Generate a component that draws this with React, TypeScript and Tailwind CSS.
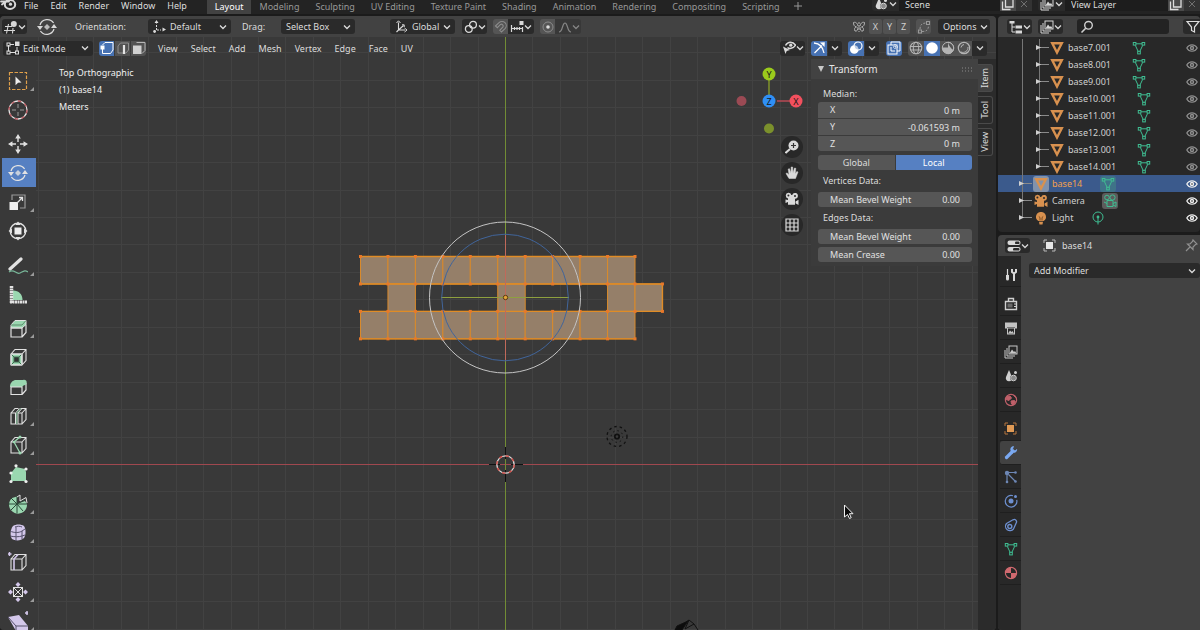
import React, { useState } from "react";

type Kids = { children?: React.ReactNode };

function Ico({ w = 14, h = 14, className = "", children }: Kids & { w?: number; h?: number; className?: string }) {
  return (
    <svg width={w} height={h} viewBox={`0 0 ${w} ${h}`} fill="none" stroke="currentColor" className={`shrink-0 ${className}`} aria-hidden="true">
      {children}
    </svg>
  );
}

const Chevron = ({ className = "" }: { className?: string }) => (
  <Ico w={8} h={6} className={className}><path d="M1 1.5 4 4.5 7 1.5" strokeWidth="1.3" /></Ico>
);

function Select({ label, options, icon, className = "" }: { label: string; options: string[]; icon?: React.ReactNode; className?: string }) {
  return (
    <label className={`relative flex h-[15px] shrink-0 items-center rounded-[3px] bg-[#2a2a2a] text-[#dcdcdc] ${className}`}>
      {icon}
      <select aria-label={label} className="h-full min-w-0 flex-1 appearance-none bg-transparent text-[9px] leading-[15px] outline-none">
        {options.map((o) => <option key={o}>{o}</option>)}
      </select>
      <Chevron className="pointer-events-none absolute right-1" />
    </label>
  );
}

function IconMenu({ label, children, className = "" }: Kids & { label: string; className?: string }) {
  return (
    <button aria-label={label} className={`flex h-[15px] shrink-0 items-center justify-between rounded-[3px] bg-[#2a2a2a] px-0.5 text-[#d8d8d8] ${className}`}>
      {children}
      <Chevron />
    </button>
  );
}

function IconButton({ label, children, className = "" }: Kids & { label: string; className?: string }) {
  return (
    <button aria-label={label} className={`flex h-[15px] shrink-0 items-center justify-center ${className}`}>{children}</button>
  );
}

/* ---------- icons ---------- */

const BlenderLogo = () => (
  <Ico w={17} h={16} className="text-[#d8d8d8]">
    <path d="M2 8.5 9 3M1 5.5h8" strokeWidth="1.8" strokeLinecap="round" />
    <ellipse cx="10" cy="8.5" rx="5.2" ry="4.4" strokeWidth="2" />
    <circle cx="10.5" cy="8.2" r="1.6" fill="currentColor" stroke="none" />
  </Ico>
);
const RotateIcon = ({ size = 20 }: { size?: number }) => (
  <svg width={size} height={size} viewBox="0 0 20 20" fill="none" stroke="currentColor" aria-hidden="true" className="shrink-0">
    <path d="M3 8a7.600 7.600 0 0 1 13.600-2M17 12a7.600 7.600 0 0 1-13.600 2" strokeWidth="1.300" />
    <path d="M0 9h6l-3 4zM20 11h-6l3-4z" fill="currentColor" stroke="none" />
    <path d="m10 7 3 3-3 3-3-3z" fill="currentColor" fillOpacity=".8" stroke="none" />
  </svg>
);
const GridBallIcon = () => (
  <Ico w={14} h={14}><path d="M1 6.500h7M0 10.500h11M4.500 4 2.500 13.500M9 8l-.5 5.500" strokeWidth="1.1" /><circle cx="9.800" cy="4" r="3" fill="currentColor" stroke="none" /></Ico>
);
const AxesDots = () => (
  <Ico w={13} h={13}><path d="M3.500 2v1.500M3.500 5v5M4 10h4" strokeDasharray="2 1" /><path d="m3.500 0 2 3h-4zM13 9.500 9.500 7.500v4z" fill="currentColor" stroke="none" /><circle cx="1.600" cy="11.500" r="1.400" fill="currentColor" stroke="none" /></Ico>
);
const AxesIcon = () => (
  <Ico w={13} h={13}><path d="M3.500 2.500V10l6.500 0M3.500 10l-2 2M3.500 10l5-4.500" strokeWidth="1.100" /><path d="M1.500 3 3.500.8 5.500 3M9.500 8l2.500 2-2.500 2M7 4.800h2.200V7" /></Ico>
);
const LinkIcon = () => (
  <Ico><circle cx="9" cy="4.800" r="3.400" strokeWidth="1.300" /><circle cx="4.800" cy="9" r="3.400" strokeWidth="1.300" /><circle cx="7" cy="7" r="1" fill="currentColor" stroke="none" /></Ico>
);
const MagnetIcon = () => (
  <Ico><path d="M1.500 6 5 2.700a4.200 4.200 0 0 1 6 6L7.500 12 5.800 10.300 9 7a1.900 1.900 0 0 0-2.500-2.600L3.300 7.700z" strokeWidth="1.100" /></Ico>
);
const SnapIcon = () => (
  <Ico><path d="M1.500 5v7M12.500 7v5M1.500 8.500h11M4.500 7v3M7 7v3M9.500 7v3" strokeWidth="1.200" /><rect x="9.500" y="1" width="4" height="4" fill="currentColor" stroke="none" /></Ico>
);
const FalloffIcon = () => <Ico><path d="M1 12c4 0 3-9 6-9s2 9 6 9" strokeWidth="1.200" /></Ico>;
const ButterflyIcon = () => (
  <Ico><path d="M7 2v10" strokeDasharray="2 1" /><path d="M6 6C5 2 3 2 1.500 2.500c0 2 .5 4 3 4.500-2 .5-2.500 2-1.500 4 2 .5 3-1 3-4M8 6c1-4 3-4 4.500-3.500 0 2-.5 4-3 4.500 2 .5 2.500 2 1.500 4-2 .5-3-1-3-4" /></Ico>
);
const AutoMergeIcon = () => (
  <Ico><path d="M3 9c0-4 2-6 6-6M5 11.500c4 0 6-1 6.500-5" strokeDasharray="2 1.500" /><rect x="1.500" y="10" width="3" height="3" /><rect x="9.500" y="1.500" width="3" height="3" /></Ico>
);
const EditModeIcon = () => (
  <Ico><path d="M2.500 4v6.500M4 11.500h6M11 6v4.500M4 3.500h4" /><rect x="1" y="2" width="3" height="3" /><rect x="1" y="10" width="3" height="3" /><rect x="9.500" y="10" width="3" height="3" /><rect x="9" y="0.500" width="4.500" height="4.500" fill="currentColor" stroke="none" /></Ico>
);
const VertSel = () => <Ico><path d="M5 1.500h8v7.500l-2.500 3.500h-8V8M2.500 4 5 1.500" /><rect x="0.500" y="4.500" width="4" height="4" fill="#fff" stroke="none" /></Ico>;
const EdgeSel = () => <Ico><path d="M4.500 2h8v7l-2.500 3H2V5z" stroke="#8f8f8f" /><path d="M8 4v9" stroke="#e4e4e4" strokeWidth="2.200" /></Ico>;
const FaceSel = () => <Ico><path d="M4.500 1.500h8.500v8l-3 3" stroke="#b5b5b5" /><rect x="1" y="4.500" width="8.500" height="8.500" fill="#d0d0d0" stroke="none" /></Ico>;
const EyeCursor = () => (
  <Ico><path d="M3.500 4.500C6 0 11 .5 13.500 4.200 11 8 7 8 5.500 6.500" strokeWidth="1.500" /><circle cx="8.800" cy="4.200" r="1.600" fill="currentColor" stroke="none" /><path d="m1 5.500 7 3.500-3.300 1-1.200 3z" fill="currentColor" stroke="none" /></Ico>
);
const GizmoIcon = () => <Ico><path d="M2 2c5.500.5 9 4 10 10M2.500 12 10 4.500" strokeWidth="1.300" /><path d="M12.800 1.200 12.500 6 8 1.500z" fill="currentColor" stroke="none" /></Ico>;
const OverlayIcon = () => <Ico><circle cx="5.300" cy="8.500" r="4.300" fill="#fff" stroke="none" /><circle cx="9" cy="5" r="4" strokeWidth="1.200" fill="#4772b3" fillOpacity=".35" /></Ico>;
const XrayIcon = () => <Ico><rect x="1" y="4" width="9" height="9" /><path d="M4 4V1h9v9h-3M4 6v4h4" /><path d="M6 6h5M8 3v5" strokeDasharray="1 1" /></Ico>;
const WireBall = () => <Ico><circle cx="7" cy="7" r="5.800" strokeWidth="1.100" /><ellipse cx="7" cy="7" rx="2.700" ry="5.800" /><path d="M1.500 5.500h11M1.500 9h11" /></Ico>;
const MatBall = () => <Ico><circle cx="7" cy="7" r="5.700" /><path d="M7 1.300a5.700 5.700 0 0 1 0 11.400V7H1.300" fill="none" /><path d="M7 1.300V7H1.300a5.700 5.700 0 0 0 11 2C10 8 8 5 7 1.300z" fill="currentColor" stroke="none" /></Ico>;
const RenderBall = () => <Ico><circle cx="7" cy="7" r="5.700" strokeWidth="1.200" /><path d="M4 6.500A3.500 3.500 0 0 1 7 3.500M4 11a5 5 0 0 0 7-5" /></Ico>;
const SceneIcon = () => <Ico><path d="m5 1 3 7a3.200 3.200 0 1 1-6 0z" fill="currentColor" stroke="none" /><circle cx="9.500" cy="9" r="3" fill="#8a8a8a" stroke="#2a2a2a" /><circle cx="9.500" cy="9" r="2.800" /><circle cx="11.500" cy="3.500" r="1.500" fill="currentColor" stroke="none" /></Ico>;
const ImagesIcon = () => <Ico><path d="M1 5v8h8M3 3v8h8" /><rect x="5" y="1" width="8" height="8" /><path d="m5.500 8.500 2.500-4 2 2.500 1-1 1.500 2.500z" fill="currentColor" stroke="none" /></Ico>;
const CopyIcon = () => <Ico><path d="M4.500 1.500h7.500v8.500H4.500zM1.500 4.500v8h8" strokeWidth="1.300" /></Ico>;
const TreeIcon = () => <Ico><rect x="0.500" y="1" width="5" height="2.500" fill="currentColor" stroke="none" /><path d="M3 3v9h3M3 7h3" /><rect x="6.500" y="5.500" width="6.500" height="3" fill="currentColor" stroke="none" /><rect x="6.500" y="10.500" width="6.500" height="3" fill="currentColor" stroke="none" /></Ico>;
const SearchIcon = () => <Ico><circle cx="8.500" cy="5.300" r="3.800" strokeWidth="1.400" /><path d="M5.700 8.200 1.500 12.500" strokeWidth="1.600" /></Ico>;
const FilterIcon = () => <Ico><path d="M1 1.500h12L8.500 7v5l-3-1.500V7z" strokeWidth="1.200" /></Ico>;
const MeshObj = () => <Ico><path d="M2.200 2.200h9.600L7 11.500z" stroke="#d8914f" strokeWidth="2.400" /></Ico>;
const MeshData = () => (
  <Ico className="text-[#3fbd92]"><path d="M4 2.800h6M3.300 4.300 6.200 10.500M10.700 4.300 7.800 10.500" /><rect x="1.300" y="1.500" width="2.600" height="2.600" /><rect x="10.100" y="1.500" width="2.600" height="2.600" /><rect x="5.700" y="10.300" width="2.600" height="2.600" /></Ico>
);
const Eye = () => <Ico w={12} h={10}><path d="M.8 5C3 .7 9 .7 11.200 5 9 9.300 3 9.300.8 5z" strokeWidth="1.200" /><circle cx="6" cy="5" r="2.200" fill="currentColor" stroke="none" /><circle cx="6" cy="5" r="0.800" fill="#282828" stroke="none" /></Ico>;
const CameraObj = ({ size = 14 }: { size?: number }) => (
  <svg width={size} height={size} viewBox="0 0 14 14" fill="currentColor" stroke="none" aria-hidden="true" className="shrink-0">
    <path d="M3.300.7a3 3 0 0 1 3 2.400h.9a2.900 2.900 0 1 1 2.800 3.600v6H3V10L.5 11V7.500L3 8V6.400A2.900 2.900 0 0 1 3.300.7zM10.500 9.500l3-1.800v5.200l-3-1.700z" fillRule="evenodd" />
    <circle cx="3.400" cy="3.500" r="1" fill="#2a2a2a" /><circle cx="10" cy="3.900" r="1" fill="#2a2a2a" />
  </svg>
);
const CameraData = () => <Ico className="text-[#3fbd92]"><circle cx="4" cy="3.500" r="2.300" /><circle cx="9.500" cy="3.500" r="2.600" /><path d="M4 6.500h6v6H4zM1 8l3 1.500M10 9.500l3-1.500v4.500l-3-1.500" /></Ico>;
const LightObj = () => <Ico className="text-[#d8914f]"><path d="M7 1a4.800 4.800 0 0 1 2.500 9h-5A4.800 4.800 0 0 1 7 1zM5 10.800h4l-.5 2.700h-3z" fill="currentColor" stroke="none" /><path d="M4.800 5.500 6 6.500v3M9.200 5.500 8 6.500v3" stroke="#7a4c22" /></Ico>;
const LightData = () => <Ico className="text-[#3fbd92]"><circle cx="7" cy="6" r="5" /><circle cx="7" cy="6" r="1.400" fill="currentColor" stroke="none" /><path d="M7 7v6.500" /></Ico>;
const PropsIcon = () => <Ico w={14} h={14}><rect x="0.500" y="1.500" width="13" height="4.600" rx="2" fill="currentColor" stroke="none" /><rect x="0.500" y="8" width="13" height="4.600" rx="2" fill="currentColor" stroke="none" /><rect x="8" y="2.500" width="4.500" height="2.600" rx="1.200" fill="#2a2a2a" stroke="none" /><rect x="6" y="9" width="6.500" height="2.600" rx="1.200" fill="#2a2a2a" stroke="none" /></Ico>;
const ObjectIcon = ({ inner = "#e6e6e6" }: { inner?: string }) => <Ico w={13} h={13}><path d="M1 4V1h3M9 1h3v3M12 9v3H9M4 12H1V9" /><rect x="3" y="3" width="7" height="7" fill={inner} stroke="none" /></Ico>;
const PinIcon = () => <Ico w={13} h={13}><path d="m8 1 4 4-1.500.5L8 8v2.500L2.500 5H5l2.500-2.500zM5 8 1 12" strokeWidth="1.200" /></Ico>;

/* ---------- top bar ---------- */

const menus = ["File", "Edit", "Render", "Window", "Help"];
const workspaces = ["Layout", "Modeling", "Sculpting", "UV Editing", "Texture Paint", "Shading", "Animation", "Rendering", "Compositing", "Scripting"];

function DataField({ label, value, icon, className = "" }: { label: string; value: string; icon: React.ReactNode; className?: string }) {
  return (
    <div className={`flex h-[11px] shrink-0 items-end ${className}`}>
      <IconMenu label={`Browse ${label}`} className="w-[27px] rounded-r-none">{icon}</IconMenu>
      <input aria-label={label} defaultValue={value} className="h-[11px] min-w-0 flex-1 bg-[#1d1d1d] px-1.5 pb-[3px] text-[9px] leading-[9px] text-[#dcdcdc] outline-none" />
      <IconButton label={`New ${label}`} className="w-4 bg-[#4a4a4a] text-[#dcdcdc]"><CopyIcon /></IconButton>
      <IconButton label={`Remove ${label}`} className="w-4 bg-[#333333] text-[#707070]"><Ico w={8} h={8}><path d="m1 1 6 6M7 1 1 7" /></Ico></IconButton>
    </div>
  );
}

function TopBar() {
  const [tab, setTab] = useState("Layout");
  return (
    <header className="flex h-[14px] shrink-0 items-start overflow-hidden bg-[#232323]">
      <div className="flex h-2 items-center"><BlenderLogo /></div>
      <nav className="flex gap-3 pl-[7px]">
        {menus.map((m) => <button key={m} className="h-[10px] leading-[9px] text-[#dedede]">{m}</button>)}
      </nav>
      <div className="flex pl-5">
        {workspaces.map((w) => (
          <button key={w} onClick={() => setTab(w)} className={`h-[14px] px-2 leading-3 ${w === tab ? "bg-[#424242] text-white" : "text-[#989898]"}`}>{w}</button>
        ))}
        <button aria-label="Add workspace" className="flex h-3 items-center px-1.5 text-[#989898]"><Ico w={8} h={8}><path d="M4 0v8M0 4h8" /></Ico></button>
      </div>
      <div className="ml-auto flex gap-[6px]">
        <DataField label="Scene" value="Scene" icon={<SceneIcon />} className="w-[160px]" />
        <DataField label="View Layer" value="View Layer" icon={<ImagesIcon />} className="w-[162px]" />
      </div>
    </header>
  );
}

/* ---------- viewport headers ---------- */

function ToolHeader() {
  return (
    <div className="flex h-[21px] shrink-0 items-center rounded-t bg-[#424242] pl-0.5 pr-1.5">
      <IconMenu label="Editor type" className="w-[25px]"><GridBallIcon /></IconMenu>
      <span className="ml-[10px] flex text-[#d8d8d8]"><RotateIcon /></span>
      <span className="ml-[18px] w-[73px]">Orientation:</span>
      <Select label="Orientation" options={["Default"]} icon={<span className="flex w-[22px] justify-center"><AxesDots /></span>} className="w-[83px]" />
      <span className="ml-[11px] w-[39px]">Drag:</span>
      <Select label="Drag" options={["Select Box"]} className="w-[74px] pl-[5px]" />
      <Select label="Transform orientation" options={["Global"]} icon={<span className="flex w-[22px] justify-center"><AxesIcon /></span>} className="ml-[35px] w-[65px]" />
      <IconMenu label="Pivot point" className="ml-[7px] w-[25px]"><LinkIcon /></IconMenu>
      <IconButton label="Snap" className="ml-1.5 w-[15px] rounded-l-[3px] bg-[#555555] text-[#8c8c8c]"><MagnetIcon /></IconButton>
      <IconMenu label="Snapping" className="w-[26px] rounded-l-none"><SnapIcon /></IconMenu>
      <IconButton label="Proportional editing" className="ml-1.5 w-[15px] rounded-l-[3px] bg-[#555555] text-[#8c8c8c]"><Ico><circle cx="7" cy="7" r="5" /><circle cx="7" cy="7" r="1.800" fill="#ddd" stroke="none" /></Ico></IconButton>
      <button aria-label="Falloff" className="flex h-[15px] w-[26px] items-center justify-between rounded-r-[3px] bg-[#383838] px-[3px] text-[#858585]"><FalloffIcon /><Chevron /></button>
      <span className="ml-auto flex w-[17px] text-[#b4b4b4]"><ButterflyIcon /></span>
      <div className="flex gap-px">
        {["X", "Y", "Z"].map((a) => <button key={a} aria-label={`Mirror ${a}`} className="h-[15px] w-[13px] rounded-[2px] bg-[#525252] leading-[15px] text-[#cfcfcf]">{a}</button>)}
      </div>
      <IconButton label="Auto merge" className="ml-1.5 w-[15px] rounded-[3px] bg-[#525252] text-[#999999]"><AutoMergeIcon /></IconButton>
      <button className="ml-[7px] flex h-[15px] w-[52px] items-center justify-between rounded-[3px] bg-[#2a2a2a] pl-[5px] pr-0.5 leading-[15px]">Options<Chevron /></button>
    </div>
  );
}

function ViewHeader() {
  return (
    <div className="relative flex h-[22px] shrink-0 items-center pl-[3px] pr-[9px]">
      <Select label="Mode" options={["Edit Mode"]} icon={<span className="flex w-5 justify-center"><EditModeIcon /></span>} className="w-[90px]" />
      <div className="ml-1.5 flex gap-px">
        <IconButton label="Vertex select" className="w-[15px] rounded-l-[3px] bg-[#4772b3] text-white"><VertSel /></IconButton>
        <IconButton label="Edge select" className="w-[15px] bg-[#525252]"><EdgeSel /></IconButton>
        <IconButton label="Face select" className="w-[15px] rounded-r-[3px] bg-[#525252]"><FaceSel /></IconButton>
      </div>
      <nav className="ml-3 flex gap-[13px]">
        {["View", "Select", "Add", "Mesh", "Vertex", "Edge", "Face", "UV"].map((m) => <button key={m} className="leading-[15px]">{m}</button>)}
      </nav>
      <IconMenu label="Object visibility" className="ml-auto w-[25px]"><EyeCursor /></IconMenu>
      <IconButton label="Show gizmos" className="ml-1.5 w-4 rounded-l-[3px] bg-[#4772b3] text-white"><GizmoIcon /></IconButton>
      <IconButton label="Gizmo options" className="ml-px w-[14px] rounded-r-[3px] bg-[#2a2a2a]"><Chevron /></IconButton>
      <IconButton label="Show overlays" className="ml-1.5 w-4 rounded-l-[3px] bg-[#4772b3] text-white"><OverlayIcon /></IconButton>
      <IconButton label="Overlay options" className="ml-px w-[14px] rounded-r-[3px] bg-[#2a2a2a]"><Chevron /></IconButton>
      <IconButton label="X-ray" className="ml-[7px] w-4 rounded-[3px] bg-[#4772b3] text-white"><XrayIcon /></IconButton>
      <div className="ml-1.5 flex text-[#b4b4b4]">
        <IconButton label="Wireframe" className="w-4 rounded-l-[3px] bg-[#525252]"><WireBall /></IconButton>
        <IconButton label="Solid" className="w-4 bg-[#4772b3] text-white"><Ico><circle cx="7" cy="7" r="5.800" fill="#fff" stroke="none" /></Ico></IconButton>
        <IconButton label="Material preview" className="w-4 bg-[#525252]"><MatBall /></IconButton>
        <IconButton label="Rendered" className="w-4 bg-[#525252]"><RenderBall /></IconButton>
        <IconButton label="Shading options" className="w-[15px] rounded-r-[3px] bg-[#2a2a2a] text-[#d8d8d8]"><Chevron /></IconButton>
      </div>
    </div>
  );
}

/* ---------- scene drawing ---------- */

const STEP = 27.45;
const X0 = 360.5;
const Y0 = 256.5;
const cells: [number, number][] = [];
for (let c = 0; c < 10; c++) cells.push([c, 0], [c, 2]);
[1, 5, 9, 10].forEach((c) => cells.push([c, 1]));
const corners = Array.from(new Set(cells.flatMap(([c, r]) => [`${c},${r}`, `${c + 1},${r}`, `${c},${r + 1}`, `${c + 1},${r + 1}`]))).map((k) => k.split(",").map(Number));

function Scene() {
  const cols = Array.from({ length: 35 }, (_, i) => 505.5 + (i - 17) * STEP);
  const rows = Array.from({ length: 22 }, (_, i) => 464.5 + (i - 15) * STEP);
  return (
    <svg className="absolute inset-0 h-full w-full" aria-hidden="true" fill="none">
      <g transform="translate(0 -37)">
        {cols.map((x) => <path key={x} d={`M${Math.floor(x) + 0.5} 37V1400`} stroke="#424242" />)}
        {rows.map((y) => <path key={y} d={`M36 ${Math.floor(y) + 0.5}H2600`} stroke="#424242" />)}
        <path d="M36 464.500H2600" stroke="#a0484f" />
        <path d="M505.500 37V1400" stroke="#728c35" />

        <g fill="#957f69" stroke="#d98a2b">
          {cells.map(([c, r]) => <rect key={`${c}-${r}`} x={X0 + c * STEP} y={Y0 + r * STEP} width={STEP} height={STEP} />)}
        </g>
        <path d={`M${X0} ${Y0}h274.500M${X0} ${Y0 + STEP}h274.500m0 0h27.450v27.450h-27.450M${X0} ${Y0 + 2 * STEP}h274.500M${X0} ${Y0 + 3 * STEP}h274.500`} stroke="#e08c26" strokeWidth="1.400" />
        <g fill="#e8782a">
          {corners.map(([c, r]) => <rect key={`${c}.${r}`} x={X0 + c * STEP - 1.5} y={Y0 + r * STEP - 1.5} width="3" height="3" />)}
        </g>

        <path d="M505.500 222v34M505.500 339v35" stroke="#7c9a34" />
        <path d="M505.500 235v126" stroke="#c0695a" />
        <path d="M441 297.500h128" stroke="#8ea03f" />
        <circle cx="505" cy="297.500" r="63.300" stroke="#41659b" />
        <circle cx="505" cy="297.500" r="75.500" stroke="#c4c4c4" />
        <circle cx="505.500" cy="297.500" r="2.200" fill="#e2a33a" stroke="#5a3a12" />

        <g stroke="#111111">
          <path d="M489 464.500h11M511 464.500h12M505.500 447v12M505.500 470v12" />
          <circle cx="505.500" cy="464.500" r="8.700" stroke="#dddddd" strokeWidth="1.300" />
          <circle cx="505.500" cy="464.500" r="8.700" stroke="#d8423c" strokeWidth="1.300" strokeDasharray="3.400 3.400" />
          <circle cx="617" cy="436.500" r="10" strokeDasharray="2.500 3" strokeWidth="1.300" />
          <circle cx="617" cy="436.500" r="5.800" strokeDasharray="1.500 3" />
          <circle cx="617" cy="436.500" r="2.200" strokeWidth="1.800" />
          <path d="m675 630 14-10 5 4 4 6M689 620l-4 9 9-5" />
          <path d="m675 630 2-4 11-5-6 9z" fill="#0c0c0c" />
        </g>

        <path d="M769 80v15" stroke="#7d8f2c" strokeWidth="1.600" />
        <path d="M777 101h13" stroke="#b84a54" strokeWidth="1.600" />
        <circle cx="741.500" cy="101" r="5" fill="#9b4a54" />
        <circle cx="769" cy="128.500" r="5" fill="#7b902c" />
        <circle cx="769" cy="74" r="6.500" fill="#9bcb1c" />
        <circle cx="769" cy="101" r="6.500" fill="#2f8ff5" />
        <circle cx="796" cy="101" r="6.500" fill="#f2505e" />
        <g fill="#161616" fontSize="9" textAnchor="middle">
          <text x="769" y="77.500">Y</text>
          <text x="769" y="104.500">Z</text>
          <text x="796" y="104.500">X</text>
        </g>
        <path d="M844.500 505v12l3-2.500 2 4 1.700-.8-1.800-4h3.600z" fill="#0a0a0a" stroke="#f2f2f2" />
      </g>
    </svg>
  );
}

/* ---------- toolbar ---------- */

const G = "#9ad7b0";
const P = "#d3c7ea";
const CubeFrame = () => <path d="M3 7h11v11H3zM3 7l4-4.500h11v11L14 18M14 7l4-4.500" strokeWidth="1.100" />;
const T = ({ children }: Kids) => <Ico w={20} h={20}>{children}</Ico>;

type Tool = { name: string; more?: boolean; icon: React.ReactNode };
const toolGroups: { gap: string; tools: Tool[] }[] = [
  { gap: "", tools: [
    { name: "Select Box", more: true, icon: <T><rect x="1.500" y="1.500" width="17" height="17" stroke="#e0a04a" strokeWidth="1.200" strokeDasharray="3.500 1.500" /><path d="m7.500 5.500 6 6-3.400.2-2.600 2.500z" fill="#eee" stroke="none" /></T> },
    { name: "Cursor", icon: <T><circle cx="10" cy="10" r="9" strokeWidth="1.300" stroke="#e6e6e6" /><circle cx="10" cy="10" r="9" strokeWidth="1.300" stroke="#b8535a" strokeDasharray="3.500 3.500" /><path d="M10 4v4M10 12v4M4 10h4M12 10h4" stroke="#9a9a9a" /></T> },
  ] },
  { gap: "mt-[5px]", tools: [
    { name: "Move", icon: <T><path d="M10 4v4M10 12v4M4 10h4M12 10h4" strokeWidth="1.400" /><path d="m10 0 2.800 4.500H7.200zM10 20l2.800-4.500H7.200zM0 10l4.500-2.800v5.600zM20 10l-4.500-2.800v5.600z" fill="currentColor" stroke="none" /></T> },
    { name: "Rotate", icon: <RotateIcon /> },
    { name: "Scale", more: true, icon: <T><path d="M4 8V3h13v13h-5" strokeWidth="1.200" stroke="#9a9a9a" /><rect x="1.500" y="10" width="8.500" height="8" fill="#eee" stroke="none" /><path d="m9 11 5-5M11 5.500h3.500V9" strokeWidth="1.300" /></T> },
    { name: "Transform", icon: <T><circle cx="10" cy="10" r="7.800" strokeWidth="1.400" /><rect x="6.500" y="6.500" width="7" height="7" fill="#eee" stroke="none" /><path d="m10 .5 2.500 3.500h-5zM10 19.500l2.500-3.500h-5zM.5 10 4 7.500v5zM19.500 10 16 7.500v5z" fill="currentColor" stroke="none" /></T> },
  ] },
  { gap: "mt-1.5", tools: [
    { name: "Annotate", more: true, icon: <T><path d="m2 13 11-10" strokeWidth="3.200" strokeLinecap="round" /><path d="M1 16c5-4 7 3 11 1s5-3 8-1" stroke="#79b89a" strokeWidth="1.200" /></T> },
    { name: "Measure", icon: <T><path d="M5 15V5.500c6 0 9.500 4 9.500 9.500z" fill={G} stroke="none" /><path d="M3.500 1v17" strokeWidth="3.500" strokeDasharray="2 .5" /><path d="M2 17h17" strokeWidth="3" strokeDasharray="2 .5" /></T> },
  ] },
  { gap: "mt-1", tools: [
    { name: "Extrude Region", more: true, icon: <T><path d="M3 7l4-4.500h11v4L14 10H3z" fill={G} /><path d="M3 7h11l4-4.500" stroke="#5c8a6c" /><path d="M3 10h11v9H3zM14 19l4-4.500v-8" strokeWidth="1.200" /></T> },
    { name: "Inset Faces", icon: <T><path d="M3 7h11v11H3z" fill={G} /><rect x="6" y="10" width="5" height="5" fill="#303030" stroke="#3f6b50" /><path d="m3 7 3 3M14 7l-3 3M3 18l3-3M14 18l-3-3" stroke="#3f6b50" /><CubeFrame /></T> },
    { name: "Bevel", icon: <T><path d="M2 11c0-4 2-6 5-7h8l3 3-4 4z" fill={G} stroke="none" /><path d="M3 11h11v7.500H3zM14 18.500l4-4.500V7" strokeWidth="1.200" /><circle cx="16" cy="6.500" r="2.700" fill={G} stroke="none" /></T> },
  ] },
  { gap: "mt-px", tools: [
    { name: "Loop Cut", more: true, icon: <T><CubeFrame /><path d="M8.500 18V7l4-4.500" stroke="#2b2b2b" strokeWidth="3" /><path d="M7.500 18V7l4-4.500M10 18V7l4-4.500" /><path d="M8.800 18V7l4-4.500" stroke={G} /></T> },
    { name: "Knife", more: true, icon: <T><CubeFrame /><path d="m12 2-6 5 6 11" stroke={G} strokeWidth="1.300" /><circle cx="12" cy="2" r="1.500" fill={G} stroke="none" /><circle cx="6" cy="7" r="1.300" fill={G} stroke="none" /><circle cx="12" cy="18" r="1.500" fill={G} stroke="none" /></T> },
    { name: "Poly Build", icon: <T><path d="M3 17V9l5-6 9 2 1 3v9z" fill={G} stroke="none" /><g fill="#eee" stroke="none"><circle cx="3" cy="17.500" r="1.600" /><circle cx="18" cy="17.500" r="1.600" /><circle cx="3" cy="9" r="1.600" /><circle cx="8" cy="1.800" r="1.600" /><circle cx="18" cy="5" r="1.600" /></g></T> },
  ] },
  { gap: "mt-px", tools: [
    { name: "Spin", more: true, icon: <T><path d="M9 10V2.500L4 4a9 9 0 1 0 15 6l-2-3z" fill={G} stroke="none" /><path d="M9 10V2M9 10 3 4M9 10H0M9 10l-6 6M9 10v9.500M9 10l6 7M9 10h10M9 10l7-4" stroke="#2b4a38" /><path d="M9 3l3-2v6l6-3.500 1 5.500" /></T> },
    { name: "Smooth", more: true, icon: <T><path d="M5 3c3-2 8-2 11 0 2 3 2 9 0 12-3 3-9 3-12 1-2-3-2-9 1-13z" fill={P} stroke="none" /><path d="M2 8c4 2 9 2 12 0l3-2M2 13c4 1 9 1 12 0l3-1M8 4v14M14 8v8M7 4c2-1 5-1 7 0" stroke="#55506a" /></T> },
    { name: "Edge Slide", more: true, icon: <T><CubeFrame /><path d="M6 18V7l4-4.500" stroke={P} strokeWidth="1.600" /><path d="M1.500 0v4M-.5 2h4" stroke={P} strokeWidth="1.500" /></T> },
  ] },
  { gap: "mt-px", tools: [
    { name: "Shrink/Fatten", more: true, icon: <T><rect x="5.500" y="5.500" width="9" height="9" /><path d="m6 6 8 8M14 6l-8 8" /><path d="m10 0 2.500 2.500L10 5 7.500 2.500zM10 15l2.500 2.500L10 20l-2.500-2.500zM0 10l2.500-2.500L5 10l-2.500 2.500zM15 10l2.500-2.500L20 10l-2.500 2.500z" fill={P} stroke="none" /></T> },
    { name: "Shear", more: true, icon: <T><path d="M0 6 11 4l9 11v5H8z" fill={P} stroke="none" /><path d="m0 6 8 9h12M8 15v5" stroke="#55506a" /><path d="M17 2h4M19 0v4" stroke={P} strokeWidth="1.500" /></T> },
  ] },
];

function Toolbar() {
  const [active, setActive] = useState("Rotate");
  return (
    <div role="toolbar" aria-label="Tools" className="flex w-9 shrink-0 flex-col overflow-hidden bg-[#393939] pl-0.5 pt-[7px] text-[#e2e2e2]">
      {toolGroups.map((g, i) => (
        <div key={i} className={`flex shrink-0 flex-col ${g.gap}`}>
          {g.tools.map((t) => (
            <button key={t.name} aria-label={t.name} onClick={() => setActive(t.name)} className={`relative flex h-[29px] w-[34px] shrink-0 items-center justify-center pr-0.5 ${active === t.name ? "bg-[#5680c2]" : ""}`}>
              {t.icon}
              {t.more && <Ico w={4} h={4} className="absolute bottom-1 right-0.5"><path d="M4 0v4H0z" fill="#9a9a9a" stroke="none" /></Ico>}
            </button>
          ))}
        </div>
      ))}
    </div>
  );
}

/* ---------- side panel ---------- */

function NumField({ id, label, value, className = "" }: { id: string; label: string; value: string; className?: string }) {
  return (
    <div className={`flex items-center bg-[#565656] px-3 text-[#e0e0e0] ${className}`}>
      <label htmlFor={id} className="shrink-0">{label}</label>
      <input id={id} defaultValue={value} className="h-full w-full min-w-0 bg-transparent text-right text-[9px] outline-none" />
    </div>
  );
}

function SidePanel() {
  const [space, setSpace] = useState("Local");
  return (
    <section aria-label="Transform" className="w-[167px] shrink-0 self-start bg-[#3b3b3b] pb-1">
      <h2 className="flex h-5 items-center bg-[#424242] pl-[7px] pr-1.5 text-[10px] text-[#e6e6e6]">
        <Ico w={6} h={6}><path d="M0 0h6L3 6z" fill="#c8c8c8" stroke="none" /></Ico>
        <span className="ml-[5px]">Transform</span>
        <Ico w={10} h={5} className="ml-auto"><path d="M0 1h10M0 4h10" stroke="#8a8a8a" strokeDasharray="1 2" /></Ico>
      </h2>
      <div className="flex flex-col pl-[7px] pr-1.5">
        <p className="mt-[7px] pl-[5px] leading-4">Median:</p>
        <div className="flex flex-col gap-px overflow-hidden rounded-[3px]">
          <NumField id="mx" label="X" value="0 m" className="h-4" />
          <NumField id="my" label="Y" value="-0.061593 m" className="h-4" />
          <NumField id="mz" label="Z" value="0 m" className="h-[15px]" />
        </div>
        <div className="mt-1 flex gap-px overflow-hidden rounded-[3px]">
          {["Global", "Local"].map((s) => (
            <button key={s} onClick={() => setSpace(s)} className={`h-[15px] flex-1 leading-[15px] ${s === space ? "bg-[#5680c2] text-white" : "bg-[#565656]"}`}>{s}</button>
          ))}
        </div>
        <p className="mt-[3px] pl-[5px] leading-4">Vertices Data:</p>
        <NumField id="vb" label="Mean Bevel Weight" value="0.00" className="mt-[3px] h-[15px] rounded-[3px]" />
        <p className="mt-[3px] pl-[5px] leading-4">Edges Data:</p>
        <NumField id="eb" label="Mean Bevel Weight" value="0.00" className="mt-[3px] h-[15px] rounded-[3px]" />
        <NumField id="ec" label="Mean Crease" value="0.00" className="mt-[3px] h-[15px] rounded-[3px]" />
      </div>
    </section>
  );
}

function SideTabs() {
  const [tab, setTab] = useState("Item");
  return (
    <div role="tablist" aria-label="Sidebar" className="flex w-[18px] shrink-0 flex-col gap-1 bg-[#2b2b2b] pt-[5px]">
      {["Item", "Tool", "View"].map((t) => (
        <button key={t} role="tab" aria-selected={t === tab} onClick={() => setTab(t)} className={`flex h-7 w-[15px] items-center justify-center rounded-r-[3px] border border-l-0 border-[#4a4a4a] ${t === tab ? "bg-[#424242]" : "bg-[#2b2b2b]"}`}>
          <span className="rotate-180 leading-3 [writing-mode:vertical-rl]">{t}</span>
        </button>
      ))}
    </div>
  );
}

function NavButtons() {
  const btn = "flex size-[22px] items-center justify-center rounded-full bg-[#282828] text-[#dadada]";
  return (
    <div className="mr-2 flex flex-col gap-1 pt-[77px]">
      <button aria-label="Zoom" className={btn}><Ico><circle cx="8.500" cy="5.500" r="5" fill="currentColor" stroke="none" /><path d="m5 9-4.500 4" strokeWidth="2" /><path d="M6 5.500h5M8.500 3v5" stroke="#333" strokeWidth="1.200" /></Ico></button>
      <button aria-label="Pan" className={btn}><Ico><path d="M4 12.500 1 7.500l1-.6 2 1.800L3.200 3l1.300-.3L6 7 6.200 1h1.400L8 7l1.500-5 1.300.3L10.200 8l1.600-2.500 1.200.5-2.500 6.500z" fill="currentColor" stroke="currentColor" strokeWidth=".5" /></Ico></button>
      <button aria-label="Camera view" className={btn}><CameraObj /></button>
      <button aria-label="Toggle projection" className={btn}><Ico><path d="M1 1h12v12H1zM5 1v12M9 1v12M1 5h12M1 9h12" strokeWidth="1.200" /></Ico></button>
    </div>
  );
}

function Viewport() {
  return (
    <main className="flex min-w-0 flex-1 flex-col overflow-hidden rounded bg-[#393939]">
      <ToolHeader />
      <div className="relative flex min-h-0 flex-1 flex-col">
        <Scene />
        <ViewHeader />
        <div className="relative flex min-h-0 flex-1">
          <Toolbar />
          <div className="flex-1 pl-[23px] pt-[5px] leading-[17px] text-[#efefef]">
            <p>Top Orthographic</p>
            <p>(1) base14</p>
            <p>Meters</p>
          </div>
          <NavButtons />
          <SidePanel />
          <SideTabs />
        </div>
      </div>
    </main>
  );
}

/* ---------- outliner ---------- */

const children = ["7", "8", "9", "10", "11", "12", "13", "14"].map((n) => `base${n}.001`);

const Branch = () => <Ico w={15} h={9} className="text-[#8a8a8a]"><path d="M4 4.500h10" /><path d="M1 2v5l5-2.500z" fill="#d0d0d0" stroke="none" /></Ico>;

function EyeToggle({ name, bright }: { name: string; bright?: boolean }) {
  return <button aria-label={`Hide ${name}`} className={`ml-auto flex pr-0.5 ${bright ? "text-[#efefef]" : "text-[#8f8f8f]"}`}><Eye /></button>;
}

function RootRow({ name, icon, data, active, last }: { name: string; icon: React.ReactNode; data: React.ReactNode; active?: boolean; last?: boolean }) {
  return (
    <li className={`flex h-[17px] items-center ${active ? "bg-[#3b5a8c]" : ""}`}>
      <span className={`w-[25px] border-r border-[#777777] ${last ? "h-[9px] self-start" : "h-full"}`} />
      <span className="-ml-[5px] flex"><Branch /></span>
      <span className={`flex size-4 items-center justify-center rounded-[3px] text-[#d8914f] ${active ? "bg-[#8292ab]" : ""}`}>{icon}</span>
      <span className={`ml-[3px] ${active ? "text-[#f2a04c]" : "text-[#cfcfcf]"}`}>{name}</span>
      {data}
      <EyeToggle name={name} bright />
    </li>
  );
}

function Outliner() {
  return (
    <section aria-label="Outliner" className="flex h-[216px] shrink-0 flex-col overflow-hidden rounded bg-[#282828]">
      <div className="flex h-[21px] shrink-0 items-center overflow-hidden bg-[#424242] pl-[9px]">
        <IconMenu label="Outliner editor" className="w-[25px]"><TreeIcon /></IconMenu>
        <IconMenu label="Display mode" className="ml-1.5 w-[25px]"><ImagesIcon /></IconMenu>
        <label className="ml-[14px] flex h-[15px] w-[92px] shrink-0 items-center rounded-[3px] bg-[#232323] pl-[3px] text-[#cfcfcf]">
          <SearchIcon />
          <input aria-label="Search outliner" className="w-full min-w-0 bg-transparent pl-1 text-[9px] outline-none" />
        </label>
        <IconButton label="Filter" className="ml-[14px] w-5 rounded-[3px] bg-[#2a2a2a] text-[#dcdcdc]"><FilterIcon /></IconButton>
      </div>
      <ul className="pt-0.5">
        {children.map((n, i) => (
          <li key={n} className="flex h-[17px] items-center">
            <span className="h-full w-[25px] border-r border-[#777777]" />
            <span className={`w-[17px] border-r border-[#777777] ${i === children.length - 1 ? "h-[9px] self-start" : "h-full"}`} />
            <span className="-ml-[5px] flex"><Branch /></span>
            <MeshObj />
            <span className="ml-1 text-[#cfcfcf]">{n}</span>
            <span className="ml-[21px] flex"><MeshData /></span>
            <EyeToggle name={n} />
          </li>
        ))}
        <RootRow name="base14" active icon={<MeshObj />} data={<span className="ml-[18px] flex size-4 items-center justify-center rounded-[3px] bg-[#3f7388]"><MeshData /></span>} />
        <RootRow name="Camera" icon={<CameraObj />} data={<span className="ml-[17px] flex size-4 items-center justify-center rounded-[3px] bg-[#5c5c5c]"><CameraData /></span>} />
        <RootRow name="Light" last icon={<LightObj />} data={<span className="ml-[18px] flex"><LightData /></span>} />
      </ul>
    </section>
  );
}

/* ---------- properties ---------- */

const propGroups: { name: string; color: string; icon: React.ReactNode }[][] = [
  [{ name: "Tool", color: "text-[#d8d8d8]", icon: <Ico><path d="M3.500 1v6" strokeWidth="1.200" /><path d="M2 7h3v4a1.500 1.500 0 0 1-3 0z" fill="currentColor" stroke="none" /><path d="M8 1v3l2 1.500L12 4V1M10 5v8" strokeWidth="2" /></Ico> }],
  [
    { name: "Render", color: "text-[#d0d0d0]", icon: <Ico><path d="M1.500 4.500h11v8h-11zM4.500 4V1.500h5V4" strokeWidth="1.400" /><rect x="3.500" y="6.500" width="5" height="4" fill="#6a6a6a" stroke="none" /><path d="M10 7h2M10 9.500h2" /></Ico> },
    { name: "Output", color: "text-[#c4c4c4]", icon: <Ico><path d="M1 1.500h12v6h-2V6H3v1.500H1z" fill="currentColor" stroke="none" /><rect x="3.500" y="7" width="7" height="6" /><path d="m4 12.500 2-3 1.500 1.500 1-1 1.500 2.500z" fill="currentColor" stroke="none" /></Ico> },
    { name: "View Layer", color: "text-[#c8c8c8]", icon: <ImagesIcon /> },
    { name: "Scene", color: "text-[#d0d0d0]", icon: <SceneIcon /> },
    { name: "World", color: "text-[#c0606a]", icon: <Ico><circle cx="7" cy="7" r="5.600" strokeWidth="1.200" /><path d="M3 3.500 6 3l1.500 2L5 7.500 2 6.500zM7 8l3.500-.5 1 1.500L9 12 7.500 11zM9.500 2.500l2.500 2" fill="currentColor" /></Ico> },
  ],
  [
    { name: "Object", color: "text-[#b5743c]", icon: <ObjectIcon inner="#e09a55" /> },
    { name: "Modifiers", color: "text-[#7aa8f0]", icon: <Ico><path d="M2.500 11.500 8 6" strokeWidth="3.200" strokeLinecap="round" /><path d="M12.700 3.500a3 3 0 1 1-3.200-3L8.500 3 11 5z" fill="currentColor" stroke="currentColor" strokeWidth=".8" /></Ico> },
    { name: "Particles", color: "text-[#6d87b5]", icon: <Ico><circle cx="3" cy="3" r="2.200" fill="currentColor" stroke="none" /><path d="M5 2.500h6M3 5v7M4.500 4.500l7 7" strokeWidth="1.200" /><circle cx="11.500" cy="2.500" r="1.300" fill="currentColor" stroke="none" /><circle cx="3" cy="12" r="1.300" fill="currentColor" stroke="none" /><circle cx="11.500" cy="11.500" r="1.300" fill="currentColor" stroke="none" /></Ico> },
    { name: "Physics", color: "text-[#6d8fcf]", icon: <Ico><path d="M9 1.800a5.800 5.800 0 1 0 3.700 4" strokeWidth="1.200" /><circle cx="7" cy="7" r="2.500" fill="currentColor" stroke="none" /><circle cx="11.500" cy="2.500" r="1.500" fill="currentColor" stroke="none" /></Ico> },
    { name: "Constraints", color: "text-[#6d8fcf]", icon: <Ico><path d="M2.500 5.500 9 1.800c2-1 4 .5 3.500 2.500L9.500 11a4.200 4.200 0 1 1-7-5.500z" strokeWidth="1.300" /><circle cx="5.800" cy="8.500" r="2" strokeWidth="1.400" /></Ico> },
    { name: "Mesh data", color: "", icon: <MeshData /> },
    { name: "Material", color: "text-[#d0696f]", icon: <Ico><circle cx="7" cy="7" r="5.600" strokeWidth="1.200" /><path d="M7 1.400a5.600 5.600 0 0 0-5.600 5.600H7zM7 7v5.600A5.600 5.600 0 0 0 12.600 7z" fill="currentColor" stroke="none" /></Ico> },
  ],
];

function Properties() {
  const [tab, setTab] = useState("Modifiers");
  return (
    <section aria-label="Properties" className="flex min-h-0 flex-1 flex-col overflow-hidden rounded-l bg-[#424242]">
      <div className="flex h-[21px] shrink-0 items-center pl-[7px] pr-0.5">
        <IconMenu label="Properties editor" className="w-[25px]"><PropsIcon /></IconMenu>
        <span className="ml-[13px] flex text-[#b8b8b8]"><ObjectIcon /></span>
        <span className="ml-1.5">base14</span>
        <button aria-label="Pin" className="ml-auto text-[#8f8f8f]"><PinIcon /></button>
      </div>
      <div className="flex min-h-0 flex-1">
        <div role="tablist" aria-label="Property tabs" aria-orientation="vertical" className="flex w-[23px] shrink-0 flex-col gap-[5px] bg-[#282828] pt-[7px]">
          {propGroups.map((g, i) => (
            <div key={i} className="flex flex-col">
              {g.map((p) => (
                <button key={p.name} role="tab" aria-label={p.name} aria-selected={p.name === tab} onClick={() => setTab(p.name)} className={`ml-0.5 flex h-6 items-center justify-center border-b border-[#1f1f1f] ${p.color} ${p.name === tab ? "rounded-l-[3px] bg-[#424242]" : ""}`}>{p.icon}</button>
              ))}
            </div>
          ))}
        </div>
        <div className="min-w-0 flex-1 pl-2 pt-[7px]">
          <Select label="Add Modifier" options={["Add Modifier"]} className="w-full pl-[5px]" />
        </div>
      </div>
    </section>
  );
}

export default function App() {
  return (
    <div className="flex h-screen flex-col gap-0.5 overflow-hidden bg-[#1b1b1b] text-[9px] text-[#dcdcdc] [font-family:'Noto_Sans','DejaVu_Sans',sans-serif]">
      <TopBar />
      <div className="flex min-h-0 flex-1 gap-0.5">
        <Viewport />
        <aside className="flex w-[202px] shrink-0 flex-col gap-[3px]">
          <Outliner />
          <Properties />
        </aside>
      </div>
    </div>
  );
}
